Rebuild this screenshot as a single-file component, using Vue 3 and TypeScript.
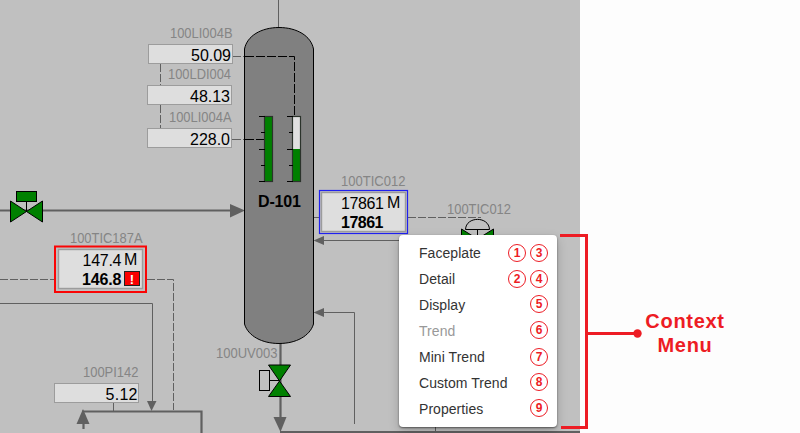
<script setup lang="ts">
interface Label { text: string; x: number; y: number; width: number }
interface Reading { value: string; x: number; y: number; width: number; textX: number; textWidth: number }
interface MenuItem { label: string; marks: number[]; disabled?: boolean; raised?: boolean }

const labels: Label[] = [
  { text: '100LI004B', x: 170, y: 38, width: 62.5 },
  { text: '100LDI004', x: 168, y: 79, width: 63 },
  { text: '100LI004A', x: 169, y: 122, width: 62.5 },
  { text: '100TIC012', x: 341, y: 186, width: 64.5 },
  { text: '100TIC012', x: 447, y: 214, width: 64 },
  { text: '100TIC187A', x: 70, y: 243, width: 72.5 },
  { text: '100UV003', x: 216, y: 358, width: 61.5 },
  { text: '100PI142', x: 83, y: 377, width: 55.5 },
]

const readings: Reading[] = [
  { value: '50.09', x: 148.5, y: 44.5, width: 84, textX: 191, textWidth: 40 },
  { value: '48.13', x: 147.5, y: 85.5, width: 84, textX: 190, textWidth: 40 },
  { value: '228.0', x: 147.5, y: 128.5, width: 84, textX: 190, textWidth: 40 },
  { value: '5.12', x: 54.5, y: 383.5, width: 84, textX: 105.5, textWidth: 32 },
]

const gauges = [
  { x: 264.5, level: 116.5 },
  { x: 292.5, level: 149 },
]

const items: MenuItem[] = [
  { label: 'Faceplate', marks: [1, 3] },
  { label: 'Detail', marks: [2, 4] },
  { label: 'Display', marks: [5], raised: true },
  { label: 'Trend', marks: [6], disabled: true, raised: true },
  { label: 'Mini Trend', marks: [7] },
  { label: 'Custom Trend', marks: [8], raised: true },
  { label: 'Properties', marks: [9], raised: true },
]
</script>

<template>
  <main class="page">
    <section class="process">
      <svg class="canvas" width="580" height="433" viewBox="0 0 580 433">
        <!-- pipes -->
        <g class="pipe">
          <path d="M278.5 0V27" />
          <path d="M0 303.5H152.5V402" />
          <path d="M323 240.5H400" />
          <path d="M323 312.5H354.5V424" />
          <path d="M435.5 427V432" />
        </g>
        <g class="pipe thick">
          <path d="M0 210.5H233M280.5 343V420" />
          <path d="M83.5 429V422M82 411.5H201.5V433" />
          <path d="M280 432.2H580" />
        </g>
        <g class="arrow">
          <path d="M230 204V217.500L245 210.500Z" />
          <path d="M313.500 240.500L324 236V245Z" />
          <path d="M313.500 312.500L324 308V317Z" />
          <path d="M147 401H156.500L151.500 411Z" />
          <path d="M83 409L76.500 424H89.500Z" />
          <path d="M273.500 417H286.500L280.500 432Z" />
        </g>

        <!-- signal lines -->
        <g class="signal">
          <path d="M160.500 64V85M160.500 105V128" />
          <path d="M0 279.500H54M147 279.500H173.500V410" />
          <path d="M113.500 403V411" />
          <path d="M408 217.500H481" />
          <path class="solid" d="M314 217.500H320M232 56.500H244M232 139.500H244" />
        </g>

        <!-- column D-101 -->
        <path class="vessel" d="M244.500 49C247 36 261 27.500 279 27.500S311 36 313.500 49V324C310 336 296 343.500 279 343.500S248 336 244.500 324Z" />
        <path class="inner-signal" d="M245 56.500H294.500V116M245 139.500H264" />
        <g v-for="g in gauges" :key="g.x">
          <rect class="tube" :x="g.x" y="116.5" width="8" height="65" />
          <rect class="fill" :x="g.x + 0.5" :y="g.level" width="7" :height="181.5 - g.level" />
          <rect class="tube-edge" :x="g.x" y="116.5" width="8" height="65" />
          <path class="tick" :d="`M${g.x - 5.5} 116.500h6m-4 16h4m-6 17h6m-4 16h4m-6 16h6`" />
        </g>
        <text class="name" x="258" y="207" textLength="43">D-101</text>

        <!-- valves -->
        <g class="valve">
          <path class="stem" d="M26.500 202V212" />
          <rect x="16.500" y="191.500" width="20" height="10" />
          <path d="M10.500 201V222L26.500 211.500Z" />
          <path d="M42.500 201V222L26.500 211.500Z" />
          <path d="M268.500 365H290.500L279.500 381Z" />
          <path d="M268.500 396.500H290.500L279.500 381Z" />
          <rect class="hollow" x="259.500" y="370.500" width="10" height="20" />
          <path class="stem" d="M270 380.500H279" />
          <path d="M461.500 229V250L477.500 239Z" />
          <path d="M493.500 229V250L477.500 239Z" />
          <path class="hollow" d="M465.500 229.500C466 216 489 216 489.500 229.500ZM477.500 230V240" />
        </g>

        <!-- single readings -->
        <g v-for="r in readings" :key="r.value">
          <rect class="field" :x="r.x" :y="r.y" :width="r.width" height="19" />
          <text class="value" :x="r.textX" :y="r.y + 16.5" :textLength="r.textWidth">{{ r.value }}</text>
        </g>

        <!-- controllers -->
        <rect class="focus blue" x="319.500" y="190.500" width="88" height="43" />
        <rect class="field double" x="321.500" y="192.500" width="84" height="39" />
        <text class="value" x="341" y="209" textLength="43">17861</text>
        <text class="value" x="387" y="208" textLength="13">M</text>
        <text class="value strong" x="341" y="228" textLength="42.500">17861</text>

        <rect class="focus red" x="55" y="246.500" width="91" height="45.500" />
        <rect class="field double" x="58.500" y="249.500" width="84" height="39" />
        <text class="value" x="82.500" y="266" textLength="39">147.4</text>
        <text class="value" x="124" y="265" textLength="14">M</text>
        <text class="value strong" x="82" y="285" textLength="39.500">146.8</text>
        <rect class="alarm" x="124.500" y="271.500" width="15" height="14" />
        <text class="alarm-text" x="132" y="283.500">!</text>

        <text v-for="(l, i) in labels" :key="i" class="label" :x="l.x" :y="l.y" :textLength="l.width" lengthAdjust="spacingAndGlyphs">{{ l.text }}</text>
      </svg>
      <nav class="menu">
        <div v-for="item in items" :key="item.label" class="item" :class="{ disabled: item.disabled }">
          <span>{{ item.label }}</span>
          <span class="marks" :class="{ raised: item.raised }">
            <i v-for="m in item.marks" :key="m" class="mark">{{ m }}</i>
          </span>
        </div>
      </nav>
    </section>

    <aside class="note">
      <p class="caption">Context<br />Menu</p>
    </aside>

    <svg class="bracket" width="84" height="200" viewBox="0 0 84 200">
      <path d="M2 5.500H28.500V197.500H3M28 103.500H80" />
      <circle cx="79.500" cy="103.500" r="4.200" />
    </svg>
  </main>
</template>

<style>
body { margin: 0; background: #fdfdfd; }
</style>

<style scoped>
.page {
  position: relative;
  display: flex;
  width: 800px;
  height: 433px;
  overflow: hidden;
  background: #fdfdfd;
  font-family: "Liberation Sans", Arial, sans-serif;
}
.process { position: relative; flex: 0 0 580px; height: 433px; background: #c0c0c0; }
.canvas { display: block; }
.pipe { fill: none; stroke: #606060; stroke-width: 1; }
.thick { stroke-width: 2.2; }
.arrow { fill: #606060; }
.signal { fill: none; stroke: #606060; stroke-width: 1; stroke-dasharray: 8 2; }
.solid { stroke-dasharray: 9 2; }
.vessel { fill: #808080; stroke: #000; stroke-width: 1; }
.inner-signal { fill: none; stroke: #000; stroke-dasharray: 9 2; }
.tube { fill: #e0e0e0; }
.fill { fill: #008000; }
.tube-edge { fill: none; stroke: #2b332b; stroke-width: 1.2; }
.tick { fill: none; stroke: #000; }
.name { font-size: 16px; font-weight: 700; }
.valve { fill: #008000; stroke: #000; stroke-width: 1; }
.hollow { fill: #c0c0c0; }
.stem { fill: none; }
.field { fill: #dedede; stroke: #9c9c9c; stroke-width: 1; }
.double { stroke-width: 1.4; }
.value { font-size: 16px; fill: #000; }
.strong { font-weight: 700; }
.label { font-size: 14px; fill: #858585; }
.focus { fill: #c0c0c0; }
.blue { stroke: #2020f0; stroke-width: 1.2; }
.red { stroke: #fa0505; stroke-width: 2; }
.alarm { fill: #fa0000; stroke: #222; }
.alarm-text { fill: #fff; font-size: 13px; font-weight: 700; text-anchor: middle; }

.menu {
  position: absolute;
  left: 399px;
  top: 235px;
  box-sizing: border-box;
  width: 158px;
  height: 192px;
  padding: 5px 9px 5px 20px;
  border-radius: 4px;
  background: #fff;
  box-shadow: 0 1px 2px rgba(0, 0, 0, .5), 0 4px 11px rgba(0, 0, 0, .2);
}
.item {
  display: flex;
  align-items: center;
  justify-content: space-between;
  height: 26px;
  color: #333;
  font-size: 14px;
  letter-spacing: .05px;
  line-height: 26px;
}
.disabled { color: #999; }
.marks { display: flex; gap: 4px; }
.raised { margin-bottom: 2px; }
.mark {
  box-sizing: border-box;
  width: 18px;
  height: 18px;
  border: 1px solid #ed1c24;
  border-radius: 50%;
  color: #ed1c24;
  font-size: 12px;
  font-style: normal;
  font-weight: 700;
  letter-spacing: 0;
  line-height: 16px;
  text-align: center;
}
.note { flex: 1; padding-left: 64px; }
.caption {
  width: 82px;
  margin: 309px 0 0;
  color: #ed1c24;
  font-size: 20px;
  font-weight: 700;
  letter-spacing: .7px;
  line-height: 24px;
  text-align: center;
}
.bracket { position: absolute; left: 558px; top: 230px; }
.bracket path { fill: none; stroke: #ed1c24; stroke-width: 3; }
.bracket circle { fill: #ed1c24; }
</style>
